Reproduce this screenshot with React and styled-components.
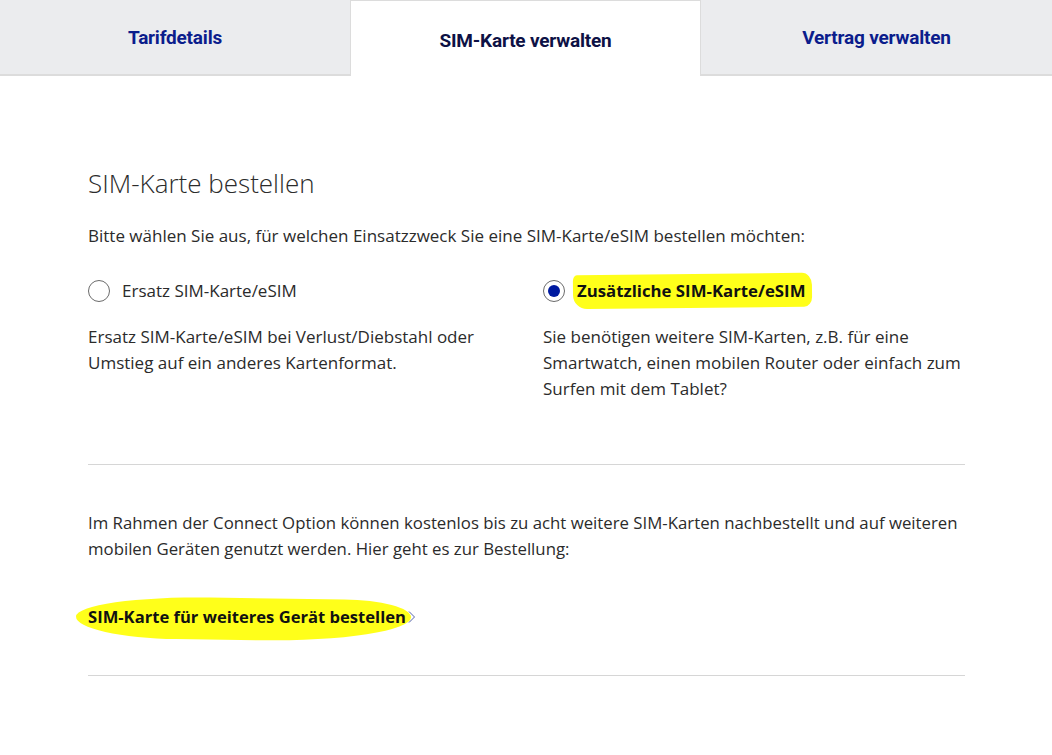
import styled, { createGlobalStyle } from 'styled-components'

const GlobalStyle = createGlobalStyle`
  body {
    margin: 0;
    background: #fff;
    font-family: 'Open Sans', 'Liberation Sans', sans-serif;
    color: #2b2b2b;
  }
`

const tabs = [
  { label: 'Tarifdetails' },
  { label: 'SIM-Karte verwalten', active: true },
  { label: 'Vertrag verwalten' },
]

const App = () => {
  return (
    <>
      <GlobalStyle />
      <TabBar>
        {tabs.map((tab) => (
          <Tab key={tab.label} $active={tab.active}>
            {tab.label}
          </Tab>
        ))}
      </TabBar>
      <Content>
        <Heading>SIM-Karte bestellen</Heading>
        <Text>
          Bitte wählen Sie aus, für welchen Einsatzzweck Sie eine SIM-Karte/eSIM
          bestellen möchten:
        </Text>
        <Options>
          <Option>
            <RadioRow>
              <Radio />
              <RadioLabel>Ersatz SIM-Karte/eSIM</RadioLabel>
            </RadioRow>
            <Description>
              Ersatz SIM-Karte/eSIM bei Verlust/Diebstahl oder Umstieg auf ein
              anderes Kartenformat.
            </Description>
          </Option>
          <Option>
            <RadioRow>
              <Radio $checked />
              <RadioLabel $checked>
                <Marker>Zusätzliche SIM-Karte/eSIM</Marker>
              </RadioLabel>
            </RadioRow>
            <Description>
              Sie benötigen weitere SIM-Karten, z.B. für eine Smartwatch, einen
              mobilen Router oder einfach zum Surfen mit dem Tablet?
            </Description>
          </Option>
        </Options>
        <Divider />
        <Info>
          Im Rahmen der Connect Option können kostenlos bis zu acht weitere
          SIM-Karten nachbestellt und auf weiteren mobilen Geräten genutzt
          werden. Hier geht es zur Bestellung:
        </Info>
        <OrderLink href="#">
          <LinkMarker>SIM-Karte für weiteres Gerät bestellen</LinkMarker>
          <svg width="8" height="14" viewBox="0 0 8 14" fill="none">
            <path d="M1 1.5l5.5 5.5-5.5 5.5" stroke="#5563a8" strokeWidth="1" />
          </svg>
        </OrderLink>
        <Divider $last />
      </Content>
    </>
  )
}

export default App

// Styles

const TabBar = styled.div`
  display: grid;
  grid-template-columns: 350px 351px 351px;
  height: 76px;
`

const Tab = styled.div`
  display: flex;
  align-items: center;
  justify-content: center;
  box-sizing: border-box;
  height: 76px;

  font-family: Roboto, 'Liberation Sans', sans-serif;
  font-weight: 700;
  font-size: 19px;
  letter-spacing: -0.2px;

  background: ${({ $active }) => ($active ? '#fff' : '#ebecee')};
  color: ${({ $active }) => ($active ? '#0d1145' : '#0b1d8c')};
  border: 1px solid #dcdcdc;
  border-width: ${({ $active }) => ($active ? '1px 1px 0 1px' : '0 0 2px 0')};
  padding-top: ${({ $active }) => ($active ? '4px' : '0')};
`

const Content = styled.main`
  width: 877px;
  margin-left: 88px;
  padding-top: 90px;
  padding-bottom: 80px;
`

const Heading = styled.h2`
  margin: 0;
  font-size: 26px;
  font-weight: 300;
  line-height: 34px;
  color: #2b2b2b;
`

const Text = styled.p`
  margin: 23px 0 0;
  font-size: 17px;
  line-height: 26px;
`

const Options = styled.div`
  display: grid;
  grid-template-columns: 455px 1fr;
  margin-top: 29px;
`

const Option = styled.div`
  display: flex;
  flex-direction: column;
  gap: 20px;
`

const RadioRow = styled.label`
  display: flex;
  align-items: center;
  gap: 12px;
  height: 26px;
`

const Radio = styled.span`
  position: relative;
  width: 22px;
  height: 22px;
  box-sizing: border-box;
  border-radius: 50%;
  border: 1px solid #6b6b6b;
  background: #fff;
  flex-shrink: 0;

  &::after {
    content: '';
    display: ${({ $checked }) => ($checked ? 'block' : 'none')};
    position: absolute;
    top: 4px;
    left: 4px;
    width: 12px;
    height: 12px;
    border-radius: 50%;
    background: #001aa0;
  }
`

const RadioLabel = styled.span`
  font-size: ${({ $checked }) => ($checked ? '16.8px' : '17px')};
  line-height: 26px;
  font-weight: ${({ $checked }) => ($checked ? 700 : 400)};
  color: ${({ $checked }) => ($checked ? '#111' : '#2b2b2b')};
`

const Marker = styled.span`
  position: relative;
  z-index: 0;

  &::before {
    content: '';
    position: absolute;
    z-index: -1;
    left: -4px;
    right: -7px;
    top: -5px;
    bottom: -6px;
    background: #ffff1a;
    border-radius: 4px 10px 8px 14px / 6px 12px 10px 14px;
    transform: rotate(-0.6deg);
  }
`

const Description = styled.p`
  margin: 0;
  font-size: 17px;
  line-height: 26px;
  max-width: 425px;
`

const Divider = styled.hr`
  margin: ${({ $last }) => ($last ? '45px 0 0' : '62px 0 0')};
  border: 0;
  border-top: 1px solid #d6d6d6;
`

const Info = styled.p`
  margin: 45px 0 0;
  font-size: 16.8px;
  line-height: 26px;
`

const OrderLink = styled.a`
  display: inline-flex;
  align-items: center;
  gap: 2px;
  margin-top: 42px;
  font-size: 16.6px;
  font-weight: 700;
  line-height: 26px;
  color: #111;
  text-decoration: none;
`

const LinkMarker = styled.span`
  position: relative;
  z-index: 0;

  &::before {
    content: '';
    position: absolute;
    z-index: -1;
    left: -12px;
    right: -5px;
    top: -6px;
    bottom: -10px;
    background: #ffff1a;
    border-radius: 40% 20% 45% 30% / 50% 40% 60% 50%;
    transform: rotate(0.8deg);
  }
`
